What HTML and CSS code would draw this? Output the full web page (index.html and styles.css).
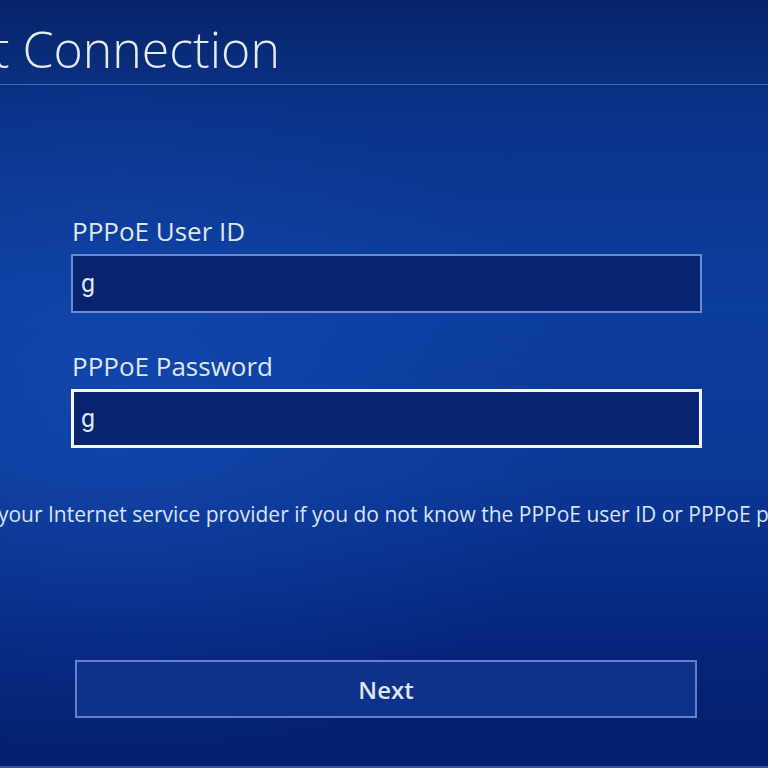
FILE: index.html
```html
<!DOCTYPE html>
<html lang="en">
<head>
  <meta charset="UTF-8">
  <title>Internet Connection</title>
  <link rel="stylesheet" href="styles.css">
</head>
<body>

  <div class="header">
    <h1 class="title">Internet Connection</h1>
  </div>

  <div class="content">
    <form class="pppoe-form">
      <label class="field-label" for="user-id">PPPoE User ID</label>
      <div class="field" id="user-id">g</div>

      <label class="field-label" for="password">PPPoE Password</label>
      <div class="field field-focus" id="password">g</div>
    </form>

    <p class="hint">Contact your Internet service provider if you do not know the PPPoE user ID or PPPoE password.</p>

    <div class="actions">
      <button type="button" class="next-button">Next</button>
    </div>
  </div>

</body>
</html>
```

FILE: styles.css
```css
html, body {
  height: 100%;
}

body {
  margin: 0;
  overflow: hidden;
  font-family: 'Open Sans', 'Noto Sans', sans-serif;
  color: #dfe7f5;
  background:
    radial-gradient(ellipse 60% 45% at 15% 55%, rgba(30, 90, 200, 0.35), rgba(30, 90, 200, 0) 100%),
    linear-gradient(to bottom, #062468 0%, #0a3388 14%, #0b3d9e 40%, #0a3896 62%, #05247a 85%, #031f6c 100%);
  display: flex;
  flex-direction: column;
}

.header {
  height: 85px;
  border-bottom: 1px solid #3e68bd;
  box-sizing: border-box;
  overflow: hidden;
}

.title {
  margin: 0 0 0 -170px;
  padding-top: 15px;
  font-size: 50px;
  font-weight: 300;
  line-height: 68px;
  white-space: nowrap;
  color: #e3ebf7;
}

.content {
  flex: 1;
  border-bottom: 2px solid #2d56a8;
  display: flex;
  flex-direction: column;
}

.pppoe-form {
  width: 631px;
  margin: 128px 0 0 71px;
  display: flex;
  flex-direction: column;
}

.field-label {
  font-size: 26px;
  margin-left: 1px;
  margin-bottom: 5px;
}

/* valeur saisie : g simple comme sur la console */
.field {
  height: 59px;
  box-sizing: border-box;
  border: 2px solid #6a89d2;
  background-color: #082470;
  padding-left: 8px;
  font-family: Roboto, 'Open Sans', sans-serif;
  font-size: 25px;
  display: flex;
  align-items: center;
  margin-bottom: 35px;
}

.field-focus {
  border: 3px solid #f2f5fb;
  padding-left: 7px;
  margin-bottom: 0;
}

.hint {
  margin: 52px 0 0 -83px;
  font-size: 21px;
  white-space: nowrap;
  color: #d9e3f4;
}

.actions {
  margin-top: 132px;
  padding-left: 75px;
}

.next-button {
  width: 622px;
  height: 58px;
  border: 2px solid #6381ca;
  background-color: #0e318a;
  color: #dde5f3;
  font-family: 'Open Sans', 'Noto Sans', sans-serif;
  font-size: 24px;
  font-weight: 600;
  cursor: pointer;
}
```
